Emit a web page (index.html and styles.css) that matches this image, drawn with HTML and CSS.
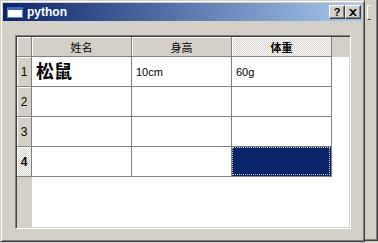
FILE: index.html
```html
<!DOCTYPE html>
<html lang="zh">
<head>
  <meta charset="UTF-8" />
  <title>python</title>
  <link rel="stylesheet" href="styles.css">
</head>
<body>
  <div class="desk">
    <div class="window">
      <div class="titlebar">
        <span class="app-icon"></span>
        <span class="title">python</span>
        <span class="tbtn help">?</span>
        <span class="tbtn close">
          <svg width="8" height="7" viewBox="0 0 8 7"><path d="M0 0h2l2 2 2-2h2L5 3.5 8 7H6L4 5 2 7H0l3-3.5z" fill="#000"/></svg>
        </span>
      </div>

      <div class="client">
        <div class="table">
          <div class="corner"></div>
          <div class="hsec">姓名</div>
          <div class="hsec">身高</div>
          <div class="hsec active">体重</div>
          <div class="hfill"></div>

          <div class="vsec">1</div>
          <div class="cell big">松鼠</div>
          <div class="cell">10cm</div>
          <div class="cell">60g</div>
          <div class="blank"></div>

          <div class="vsec">2</div>
          <div class="cell"></div>
          <div class="cell"></div>
          <div class="cell"></div>
          <div class="blank"></div>

          <div class="vsec">3</div>
          <div class="cell"></div>
          <div class="cell"></div>
          <div class="cell"></div>
          <div class="blank"></div>

          <div class="vsec active">4</div>
          <div class="cell"></div>
          <div class="cell"></div>
          <div class="cell selected"><span class="focus"></span></div>
          <div class="blank"></div>

          <div class="vfill"></div>
          <div class="blank wide"></div>
        </div>
      </div>
    </div>

    <div class="behind">
      <span class="frag"></span>
    </div>
  </div>
</body>
</html>
```

FILE: styles.css
```css
body {
  margin: 0;
  background-color: #d4d0c8;
  font-family: "Liberation Sans", Arial, sans-serif;
  font-size: 11px;
  color: #000;
}
.desk {
  display: flex;
  width: 378px;
  height: 243px;
  overflow: hidden;
}
.window {
  width: 365px;
  height: 242px;
  box-sizing: border-box;
  background-color: #d4d0c8;
  border: 1px solid;
  border-color: #d4d0c8 #404040 #404040 #d4d0c8;
  box-shadow: inset 1px 1px 0 #fff, inset -1px -1px 0 #808080;
  padding: 2px;
}
.titlebar {
  height: 18px;
  display: flex;
  align-items: center;
  background: linear-gradient(to right, #0a246a, #a6caf0);
  color: #fff;
  padding: 0 0 0 4px;
}
.app-icon {
  width: 16px;
  height: 11px;
  box-sizing: border-box;
  background-color: #fff;
  border: 1px solid #6b86c0;
  border-top: 3px solid #3a64c0;
  margin-right: 4px;
}
.title {
  font-weight: bold;
  font-size: 12px;
  flex: 1;
}
.tbtn {
  width: 16px;
  height: 14px;
  box-sizing: border-box;
  background-color: #d4d0c8;
  border: 1px solid;
  border-color: #fff #404040 #404040 #fff;
  box-shadow: inset -1px -1px 0 #808080;
  color: #000;
  font-weight: bold;
  font-size: 11px;
  display: flex;
  align-items: center;
  justify-content: center;
  line-height: 1;
}
.close {
  margin-right: 1px;
}
.client {
  padding: 14px 11px 11px 12px;
}
.table {
  height: 194px;
  box-sizing: border-box;
  border: 1px solid;
  border-color: #808080 #fff #fff #808080;
  box-shadow: inset 1px 1px 0 #404040, inset -1px -1px 0 #d4d0c8;
  padding: 1px;
  display: grid;
  grid-template-columns: 15px 100px 100px 100px 1fr;
  grid-template-rows: 20px 30px 30px 30px 30px 1fr;
  background-color: #fff;
}
.corner,
.hsec,
.vsec,
.hfill,
.vfill {
  background-color: #d4d0c8;
  box-sizing: border-box;
}
.hsec,
.vsec,
.corner {
  border-right: 1px solid #808080;
  border-bottom: 1px solid #808080;
  box-shadow: inset 1px 1px 0 #fff;
  display: flex;
  align-items: center;
  justify-content: center;
  font-family: "Noto Sans CJK SC", "Liberation Sans", sans-serif;
  font-size: 11px;
}
.vsec {
  font-family: "Liberation Sans", Arial, sans-serif;
  font-size: 12px;
}
.active {
  font-weight: bold;
  background-color: #fff;
  background-image: repeating-conic-gradient(#d4d0c8 0 25%, #fff 0 50%);
  background-size: 2px 2px;
}
.hfill {
  border-bottom: 1px solid #d4d0c8;
}
.cell {
  box-sizing: border-box;
  border-right: 1px solid #808080;
  border-bottom: 1px solid #808080;
  padding: 4px 4px;
  display: flex;
  align-items: center;
}
.big {
  font-family: "Noto Sans CJK SC", sans-serif;
  font-weight: bold;
  font-size: 18px;
  align-items: center;
  padding-top: 0;
}
.selected {
  background-color: #0a246a;
  padding: 0;
  position: relative;
}
.focus {
  position: absolute;
  inset: 0 1px 1px 0;
  border: 1px dotted #d4d0c8;
}
.vfill {
  grid-column: 1;
}
.wide {
  grid-column: 2 / 6;
}
.behind {
  width: 13px;
  height: 241px;
  box-sizing: border-box;
  background-color: #d4d0c8;
  border-right: 1px solid #404040;
  border-bottom: 1px solid #404040;
  box-shadow: inset -1px -1px 0 #808080;
  padding-top: 5px;
}
.frag {
  display: block;
  width: 3px;
  height: 13px;
  margin-left: 2px;
  border-left: 1px solid #fff;
  border-top: 1px solid #fff;
  border-bottom: 1px solid #404040;
}
```
